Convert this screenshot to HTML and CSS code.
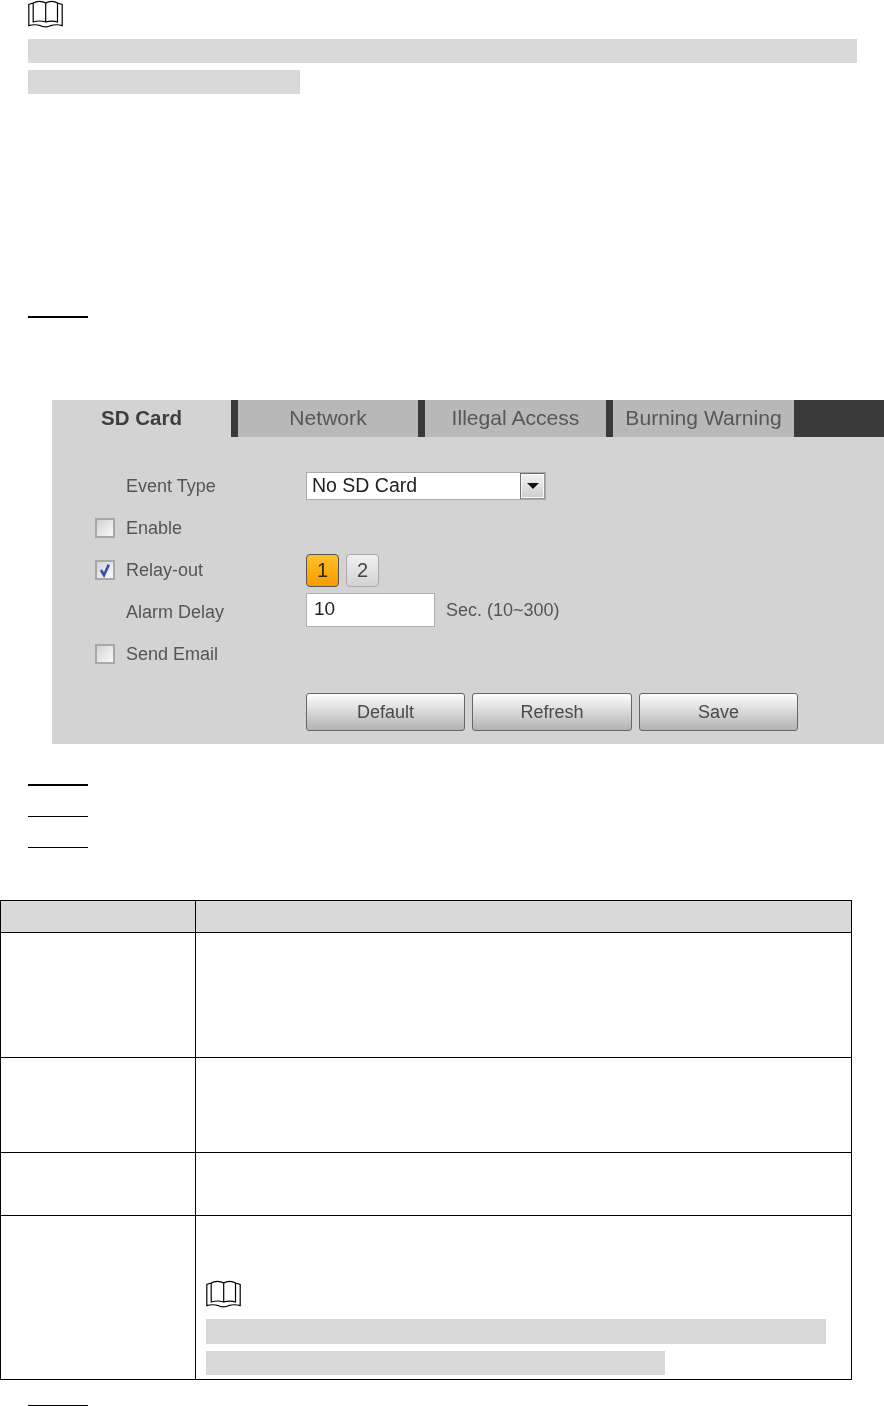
FILE: index.html
```html
<!DOCTYPE html>
<html lang="en">
<head>
<meta charset="utf-8">
<title>SD Card alarm settings</title>
<link rel="stylesheet" href="styles.css">
</head>
<body>
<main class="page">
  <svg class="book" viewBox="0 0 35 27" aria-hidden="true">
    <path d="M5.2 2C8.5-.2 14.5-.2 17.7 2C21-.2 26.5-.2 29.5 2M5.2 2V21C9 19.8 14 19.8 17.7 21C21.5 19.8 26 19.8 29.5 21V2M17.7 2V21M5.2 2L.8 3.4V24.6C4.5 23.5 9 23.6 12.5 24.6C14 26.2 21 26.2 22.5 24.6C26 23.6 30.5 23.5 34.2 24.6V3.4L29.5 2"/>
  </svg>
  <div class="bar bar-first bar-note-a"></div>
  <div class="bar bar-second bar-note-b"></div>

  <div class="step step-a"></div>

  <section class="panel">
    <div class="tabs">
      <div class="tab tab-active">SD Card</div>
      <div class="tab tab-network">Network</div>
      <div class="tab tab-illegal">Illegal Access</div>
      <div class="tab tab-burning">Burning Warning</div>
      <div class="tab-rest"></div>
    </div>
    <div class="form">
      <span class="cell"></span>
      <span class="label">Event Type</span>
      <div class="select"><span class="select-value">No SD Card</span><span class="select-btn"><i class="select-arrow"></i></span></div>

      <span class="cell"><span class="check"></span></span>
      <span class="label">Enable</span>
      <span class="cell"></span>

      <span class="cell"><span class="check"><svg class="tick" viewBox="0 0 16 16" aria-hidden="true"><path d="M4 8L7 13.2L11.8 2.6"/></svg></span></span>
      <span class="label">Relay-out</span>
      <div class="relays"><span class="relay relay-on">1</span><span class="relay">2</span></div>

      <span class="cell"></span>
      <span class="label">Alarm Delay</span>
      <div class="delay"><span class="input">10</span><span class="label">Sec. (10~300)</span></div>

      <span class="cell"><span class="check"></span></span>
      <span class="label">Send Email</span>
      <span class="cell"></span>
    </div>
    <div class="actions">
      <span class="btn">Default</span>
      <span class="btn btn-refresh">Refresh</span>
      <span class="btn btn-save">Save</span>
    </div>
  </section>

  <div class="step step-b"></div>
  <div class="step step-c"></div>
  <div class="step step-d"></div>

  <table class="params">
    <colgroup><col class="col-name"><col></colgroup>
    <tr class="row-head"><th></th><th class="last"></th></tr>
    <tr class="row-1"><td></td><td class="last"></td></tr>
    <tr class="row-2"><td></td><td class="last"></td></tr>
    <tr class="row-3"><td></td><td class="last"></td></tr>
    <tr class="row-4">
      <td class="bottom"></td>
      <td class="last bottom note-cell">
        <svg class="book book-inner" viewBox="0 0 35 27" aria-hidden="true">
          <path d="M5.2 2C8.5-.2 14.5-.2 17.7 2C21-.2 26.5-.2 29.5 2M5.2 2V21C9 19.8 14 19.8 17.7 21C21.5 19.8 26 19.8 29.5 21V2M17.7 2V21M5.2 2L.8 3.4V24.6C4.5 23.5 9 23.6 12.5 24.6C14 26.2 21 26.2 22.5 24.6C26 23.6 30.5 23.5 34.2 24.6V3.4L29.5 2"/>
        </svg>
        <div class="bar bar-cell-a"></div>
        <div class="bar bar-cell-b"></div>
      </td>
    </tr>
  </table>

  <div class="step step-e"></div>
</main>
</body>
</html>
```
FILE: styles.css
```css
* { box-sizing: border-box; }
html, body { margin: 0; padding: 0; background: #fff; }
body { font-family: "Liberation Sans", Arial, sans-serif; overflow: hidden; }

.page { width: 884px; height: 1406px; padding-top: 1px; overflow: hidden; }

.book { display: block; width: 35px; height: 27px; margin-left: 28px; overflow: visible; }
.book path { fill: none; stroke: #000; stroke-width: 1.2; }

.bar { background: #d9d9d9; }
.bar-first { margin-left: 28px; margin-top: 11px; height: 24px; }
.bar-note-a { width: 829px; }
.bar-second { margin-left: 28px; margin-top: 7px; height: 24px; }
.bar-note-b { width: 272px; }

.step { width: 60px; margin-left: 28px; background: #000; }
.step-a { height: 2px; margin-top: 222px; }
.step-b { height: 2px; margin-top: 40px; }
.step-c { height: 1px; margin-top: 30px; }
.step-d { height: 1px; margin-top: 30px; }
.step-e { height: 1px; margin-top: 25px; }

/* Web UI panel */
.panel {
  margin: 82px 0 0 52px;
  height: 344px;
  background: #d3d3d3;
  color: #555;
  filter: blur(.3px);
}
.tabs { display: flex; height: 37px; background: #3a3a3a; }
.tab {
  display: flex;
  align-items: center;
  justify-content: center;
  padding-bottom: 2px;
  margin-right: 7px;
  background: #b8b8b8;
  font-size: 21.1px;
  color: #575757;
  white-space: nowrap;
}
.tab-active { width: 179px; background: #d3d3d3; font-weight: 700; font-size: 20.5px; color: #3d3d3d; }
.tab-network { width: 180px; }
.tab-illegal { width: 181px; }
.tab-burning { width: 181px; margin-right: 0; }
.tab-rest { flex: 1; }

.form {
  display: grid;
  grid-template-columns: 31px 180px 1fr;
  grid-auto-rows: 42px;
  align-items: center;
  padding: 28px 0 0 43px;
}
.cell { display: flex; align-items: center; min-height: 1px; }
.label { font-size: 18px; color: #555; white-space: nowrap; }

.select {
  display: flex;
  width: 240px;
  height: 28px;
  background: #fff;
  border: 1.5px solid #a9a9ae;
}
.select-value { flex: 1; padding-left: 5px; font-size: 19.5px; line-height: 24px; color: #222; }
.select-btn {
  width: 25px;
  display: flex;
  align-items: center;
  justify-content: center;
  background: linear-gradient(#f2f2f2, #cfcfcf);
  border: 1.5px solid #6f6f6f;
  border-right-color: #999;
  border-bottom-color: #999;
  box-shadow: inset 0 0 0 1px #f7f7f7;
}
.select-arrow {
  width: 0;
  height: 0;
  border-style: solid;
  border-width: 6px 6px 0;
  border-color: #111 transparent transparent;
}

.check {
  display: block;
  width: 20px;
  height: 20px;
  border: 2px solid #a8a8a8;
  background: linear-gradient(135deg, #d2d2d6, #fafafa);
}
.tick { display: block; width: 16px; height: 16px; }
.tick path { fill: none; stroke: #3b4fa5; stroke-width: 2.6; }

.relays { display: flex; gap: 7px; }
.relay {
  width: 33px;
  height: 33px;
  display: flex;
  align-items: center;
  justify-content: center;
  border: 1.5px solid #a8a8a8;
  border-radius: 4px;
  background: linear-gradient(#f0f0f0, #d2d2d2);
  font-size: 20px;
  color: #444;
}
.relay-on {
  border-color: #555;
  background: linear-gradient(#ffc02a, #f89c00);
  color: #2f2a00;
}

.delay { display: flex; align-items: center; gap: 11px; margin-bottom: 4px; }
.input {
  display: block;
  width: 129px;
  height: 34px;
  padding-left: 7px;
  background: #fff;
  border: 1.5px solid #b0b0b0;
  font-size: 19px;
  line-height: 29px;
  color: #222;
}

.actions { display: flex; gap: 7px; padding: 18px 0 0 254px; }
.btn {
  width: 159px;
  height: 38px;
  display: flex;
  align-items: center;
  justify-content: center;
  border: 1.5px solid #666;
  border-radius: 3px;
  background: linear-gradient(#fdfdfd, #b2b2b2);
  font-size: 18px;
  color: #4a4a4a;
}
.btn-refresh { width: 160px; }
.btn-save { width: 159px; }

/* Parameter table */
.params {
  width: 852px;
  margin-top: 52px;
  border-collapse: separate;
  border-spacing: 0;
  table-layout: fixed;
}
.col-name { width: 195px; }
.params th, .params td {
  padding: 0;
  border-top: 1px solid #000;
  border-left: 1px solid #000;
  vertical-align: top;
}
.params th { background: #d9d9d9; }
.params .last { border-right: 1px solid #000; }
.params .bottom { border-bottom: 1px solid #000; }
.row-head { height: 32px; }
.row-1 { height: 125px; }
.row-2 { height: 95px; }
.row-3 { height: 63px; }
.row-4 { height: 165px; }
.params .note-cell { padding: 65px 0 0 10px; }
.book-inner { margin-left: 0; }
.bar-cell-a { width: 620px; height: 25px; margin-top: 11px; }
.bar-cell-b { width: 459px; height: 24px; margin-top: 7px; }
```
